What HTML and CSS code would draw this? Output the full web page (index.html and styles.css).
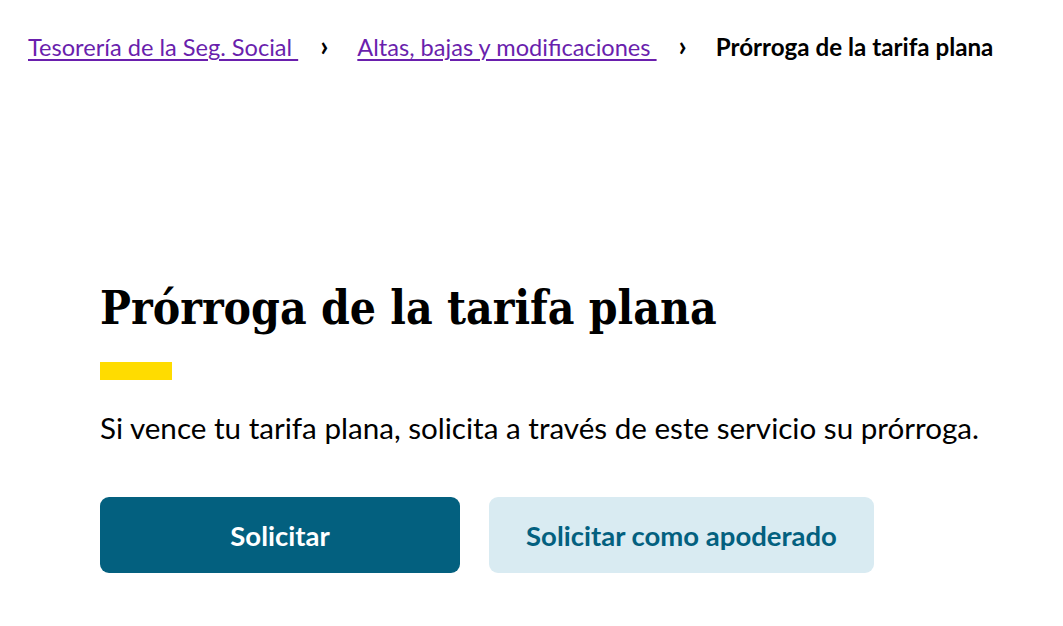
FILE: index.html
```html
<!DOCTYPE html>
<html lang="es">
<head>
<meta charset="utf-8">
<title>Prórroga de la tarifa plana</title>
<link rel="stylesheet" href="styles.css">
</head>
<body>
<nav class="breadcrumb">
  <a class="crumb-link" href="#">Tesorería de la Seg. Social </a>
  <span class="sep">›</span>
  <a class="crumb-link" href="#">Altas, bajas y modificaciones </a>
  <span class="sep">›</span>
  <span class="crumb-current">Prórroga de la tarifa plana</span>
</nav>
<main class="content">
  <h1 class="title">Prórroga de la tarifa plana</h1>
  <div class="accent"></div>
  <p class="lead">Si vence tu tarifa plana, solicita a través de este servicio su prórroga.</p>
  <div class="actions">
    <a class="btn btn-primary" href="#">Solicitar</a>
    <a class="btn btn-secondary" href="#">Solicitar como apoderado</a>
  </div>
</main>
</body>
</html>
```
FILE: styles.css
```css
html, body {
  margin: 0;
  padding: 0;
  background: #ffffff;
}
body {
  font-family: Lato, "Liberation Sans", sans-serif;
  color: #000;
}
.breadcrumb {
  display: flex;
  align-items: baseline;
  padding: 30px 0 0 28px;
  font-size: 23.6px;
  line-height: 30px;
}
.crumb-link {
  color: #6a1fad;
  text-decoration: underline;
  text-underline-offset: 3px;
  text-decoration-thickness: 2px;
  white-space: pre;
}
.sep {
  font-weight: 700;
  font-size: 28px;
  margin: 0 29px 0 22px;
}
.crumb-current {
  font-weight: 700;
  font-size: 24.2px;
}
.content {
  padding: 0 0 0 100px;
  margin-top: 216px;
}
.title {
  margin: 0;
  font-family: "DejaVu Serif Condensed", "DejaVu Serif", serif;
  font-weight: 700;
  font-size: 45.8px;
  line-height: 60px;
  color: #000;
}
.accent {
  width: 72px;
  height: 18px;
  background: #ffdc00;
  margin-top: 24px;
}
.lead {
  margin: 30px 0 0;
  font-size: 29.6px;
  line-height: 36px;
}
.actions {
  display: flex;
  gap: 29px;
  margin-top: 51px;
}
.btn {
  display: flex;
  align-items: center;
  justify-content: center;
  height: 76px;
  border-radius: 9px;
  font-weight: 700;
  font-size: 27.5px;
  text-decoration: none;
}
.btn-primary {
  width: 360px;
  background: #03607f;
  color: #fff;
}
.btn-secondary {
  width: 385px;
  background: #d9ebf2;
  color: #03607f;
}
```
